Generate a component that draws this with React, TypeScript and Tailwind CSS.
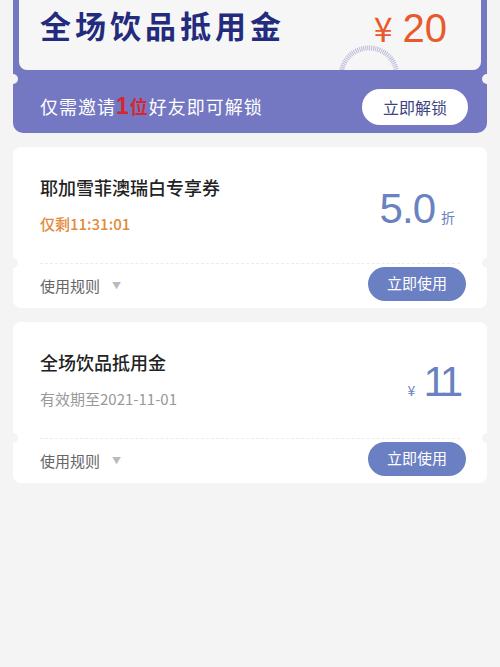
import React from 'react'

const font = { fontFamily: '"Noto Sans CJK SC", "Noto Sans", sans-serif' }
const num = { fontFamily: '"Liberation Sans", sans-serif' }

function Notches({ top }: { top: string }) {
  return (
    <>
      <div className={`absolute -left-[5px] ${top} size-[10px] rounded-full bg-[#f4f4f5]`} />
      <div className={`absolute -right-[5px] ${top} size-[10px] rounded-full bg-[#f4f4f5]`} />
    </>
  )
}

function Stamp() {
  return (
    <svg className="absolute left-[318px] top-[44px]" width="64" height="26" viewBox="0 0 64 26">
      <circle cx="32" cy="32" r="28" fill="none" stroke="#b9bbd6" strokeWidth="5" strokeDasharray="1 1" />
    </svg>
  )
}

function LockedCoupon() {
  return (
    <div className="relative mx-[13px] rounded-b-[10px] bg-[#7478c2] px-[6px]">
      <Notches top="top-[74px]" />
      <div className="relative flex h-[70px] items-start justify-between overflow-hidden rounded-b-[8px] bg-[#f6f6f7] pl-[21px] pr-[34px]">
        <div className="pt-[3px] text-[31px] font-bold leading-[44px] tracking-[4px] text-[#232b7c]">全场饮品抵用金</div>
        <div className="flex items-baseline text-[#e9592b]">
          <span className="text-[34px] leading-[56px]">¥</span>
          <span className="ml-[10px] text-[40px] leading-[56px]" style={num}>20</span>
        </div>
        <Stamp />
      </div>
      <div className="flex h-[63px] items-center justify-between pl-[21px] pr-[13px] pt-[10px]">
        <div className="flex items-baseline text-[18px] tracking-[1px] text-white">
          仅需邀请
          <span className="text-[23px] font-black leading-none text-[#d9262e]" style={num}>1</span>
          <span className="font-bold text-[#d9262e]">位</span>
          好友即可解锁
        </div>
        <button className="h-[36px] w-[106px] rounded-full bg-white text-[16px] text-[#3b4382]">立即解锁</button>
      </div>
    </div>
  )
}

function Coupon({
  title,
  sub,
  subClass,
  value,
  valuePad,
}: {
  title: string
  sub: string
  subClass: string
  value: React.ReactNode
  valuePad: string
}) {
  return (
    <div className="relative mx-[13px] rounded-[8px] bg-white">
      <Notches top="top-[111px]" />
      <div className={`flex h-[116px] items-center justify-between pl-[27px] ${valuePad}`}>
        <div className="flex flex-col gap-[14px] pb-[2px]">
          <div className="text-[18px] font-medium leading-[26px] text-[#222]">{title}</div>
          <div className={subClass}>{sub}</div>
        </div>
        {value}
      </div>
      <div className="mx-[27px] border-t border-dashed border-[#ececec]" />
      <div className="flex h-[44px] items-center justify-between pl-[27px] pr-[21px]">
        <div className="flex items-center text-[15px] text-[#666]">
          使用规则
          <span className="ml-[12px] text-[9px] text-[#bbb]">▼</span>
        </div>
        <button className="mb-[5px] h-[34px] w-[98px] rounded-full bg-[#6a80c2] text-[15px] text-white">立即使用</button>
      </div>
    </div>
  )
}

export default function App() {
  return (
    <div className="min-h-[667px] w-[500px] bg-[#f4f4f5]" style={font}>
      <LockedCoupon />
      <div className="mt-[14px] flex flex-col gap-[14px]">
        <Coupon
          title="耶加雪菲澳瑞白专享券"
          sub="仅剩11:31:01"
          subClass="text-[15px] font-medium leading-[20px] text-[#e2893a]"
          valuePad="pr-[32px]"
          value={
            <div className="flex items-baseline pt-[8px] text-[#6a82c0]">
              <span className="text-[42px] font-medium leading-none tracking-[-1px]" style={num}>5.0</span>
              <span className="ml-[6px] text-[14px]">折</span>
            </div>
          }
        />
        <Coupon
          title="全场饮品抵用金"
          sub="有效期至2021-11-01"
          subClass="text-[15px] leading-[20px] text-[#999]"
          valuePad="pr-[28px]"
          value={
            <div className="flex items-baseline pt-[4px] text-[#6a82c0]">
              <span className="mr-[8px] text-[14px]">¥</span>
              <span className="text-[42px] font-medium leading-none tracking-[-4px]" style={num}>11</span>
            </div>
          }
        />
      </div>
    </div>
  )
}
